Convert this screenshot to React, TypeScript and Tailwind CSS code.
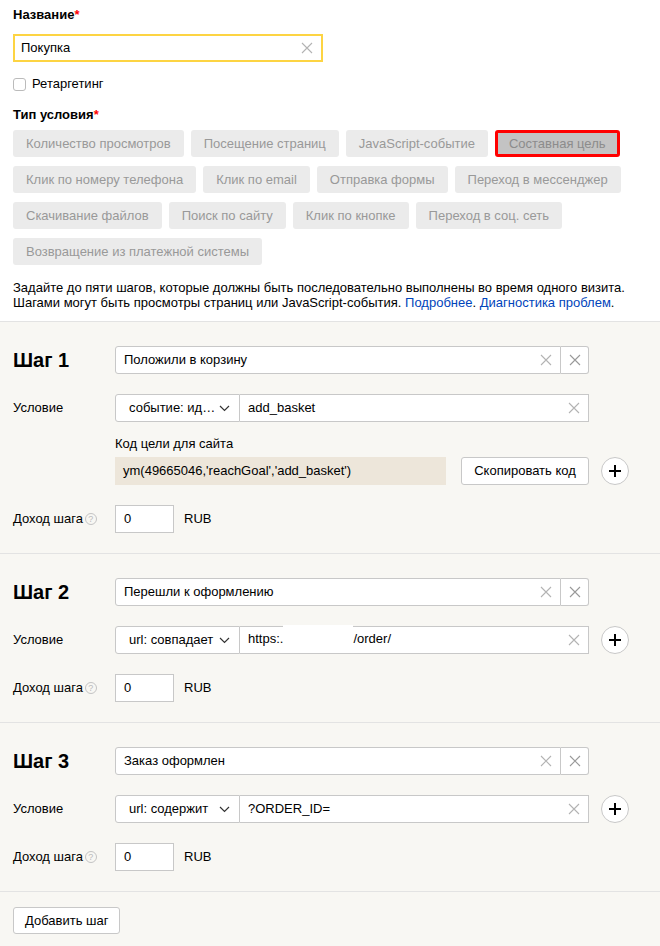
import React from "react";

const font = { fontFamily: '"Liberation Sans", Arial, sans-serif' };

const goalTypes = [
  ["Количество просмотров", "Посещение страниц", "JavaScript-событие", "Составная цель"],
  ["Клик по номеру телефона", "Клик по email", "Отправка формы", "Переход в мессенджер"],
  ["Скачивание файлов", "Поиск по сайту", "Клик по кнопке", "Переход в соц. сеть"],
  ["Возвращение из платежной системы"],
];

const Cross = ({ size = 12, color = "#b3b3b3" }: { size?: number; color?: string }) => (
  <svg width={size} height={size} viewBox="0 0 12 12" fill="none" stroke={color} strokeWidth="1.1">
    <path d="M1 1l10 10M11 1L1 11" />
  </svg>
);

const Chevron = () => (
  <svg width="11" height="7" viewBox="0 0 11 7" fill="none" stroke="#333" strokeWidth="1.2">
    <path d="M1 1l4.5 4.5L10 1" />
  </svg>
);

const PlusCircle = () => (
  <button className="ml-[12px] w-[28px] h-[28px] rounded-full border border-[#c8c8c8] bg-white flex items-center justify-center">
    <svg width="12" height="12" viewBox="0 0 12 12" stroke="#000" strokeWidth="2">
      <path d="M6 0v12M0 6h12" />
    </svg>
  </button>
);

const QuestionIcon = () => (
  <span className="ml-[2px] inline-flex w-[12px] h-[12px] rounded-full border border-[#c4c4c4] text-[9px] leading-none text-[#bbb] items-center justify-center">
    ?
  </span>
);

type Step = {
  n: number;
  name: string;
  cond: string;
  value: React.ReactNode;
  code?: boolean;
  plus?: boolean;
};

const steps: Step[] = [
  { n: 1, name: "Положили в корзину", cond: "событие: ид…", value: "add_basket", code: true },
  {
    n: 2,
    name: "Перешли к оформлению",
    cond: "url: совпадает",
    value: (
      <>
        https:.<span className="inline-block w-[70px] h-[24px] bg-white align-middle -mt-[6px]" />/order/
      </>
    ),
    plus: true,
  },
  { n: 3, name: "Заказ оформлен", cond: "url: содержит", value: "?ORDER_ID=", plus: true },
];

const StepBlock = ({ s }: { s: Step }) => (
  <div className="pl-[13px] pt-[24px] pb-[20px] border-b border-[#e3e3e3]">
    <div className="flex items-center h-[28px]">
      <div className="w-[102px] text-[20px] leading-[28px] font-bold text-black">Шаг {s.n}</div>
      <div className="flex h-[28px] w-[474px]">
        <div className="flex-1 flex items-center bg-white border border-[#c8c8c8] rounded-l-[3px] pl-[8px] pr-[8px] text-[13px] text-black">
          <span className="flex-1">{s.name}</span>
          <Cross />
        </div>
        <div className="w-[28px] flex items-center justify-center bg-white border border-l-0 border-[#c8c8c8] rounded-r-[3px]">
          <Cross color="#999" />
        </div>
      </div>
    </div>

    <div className="flex items-center h-[28px] mt-[20px]">
      <div className="w-[102px] text-[13px] text-black">Условие</div>
      <div className="flex h-[28px] w-[474px]">
        <div className="w-[125px] flex items-center justify-between bg-white border border-[#c8c8c8] rounded-l-[3px] pl-[13px] pr-[9px] text-[13px] text-black">
          <span>{s.cond}</span>
          <Chevron />
        </div>
        <div className="flex-1 flex items-center bg-white border border-l-0 border-[#c8c8c8] pl-[8px] pr-[8px] text-[13px] text-black">
          <span className="flex-1">{s.value}</span>
          <Cross />
        </div>
      </div>
      {s.plus && <PlusCircle />}
    </div>

    {s.code && (
      <div className="ml-[102px] mt-[14px]">
        <div className="text-[13px] text-black leading-[16px]">Код цели для сайта</div>
        <div className="flex items-center h-[28px] mt-[5px]">
          <div className="w-[331px] h-[28px] bg-[#ede6da] flex items-center pl-[8px] text-[13px] text-black">
            ym(49665046,'reachGoal','add_basket')
          </div>
          <button className="ml-[15px] w-[128px] h-[28px] bg-white border border-[#c8c8c8] rounded-[3px] text-[13px] text-black">
            Скопировать код
          </button>
          <PlusCircle />
        </div>
      </div>
    )}

    <div className="flex items-center h-[28px] mt-[20px]">
      <div className="w-[102px] text-[13px] text-black flex items-center">
        Доход шага
        <QuestionIcon />
      </div>
      <div className="w-[59px] h-[28px] bg-white border border-[#c8c8c8] flex items-center pl-[8px] text-[13px] text-black">
        0
      </div>
      <span className="ml-[10px] text-[13px] text-black">RUB</span>
    </div>
  </div>
);

export default function App() {
  return (
    <div className="w-[660px] min-h-[946px] bg-[#f8f7f3] leading-[16px]" style={font}>
      <div className="bg-white px-[13px] pt-[7px] pb-[11px] border-b border-[#e3e3e3]">
        <div className="text-[13px] font-bold text-black">
          Название<span className="text-[#f00]">*</span>
        </div>
        <div className="mt-[11px] w-[310px] h-[28px] border-2 border-[#fdd443] flex items-center pl-[6px] pr-[8px] text-[13px] text-black">
          <span className="flex-1">Покупка</span>
          <Cross />
        </div>
        <label className="mt-[14px] flex items-center gap-[6px] text-[13px] text-black">
          <span className="w-[13px] h-[13px] border border-[#bbb] rounded-[3px] bg-white" />
          Ретаргетинг
        </label>
        <div className="mt-[15px] text-[13px] font-bold text-black">
          Тип условия<span className="text-[#f00]">*</span>
        </div>
        <div className="mt-[7px] flex flex-col gap-[9px]">
          {goalTypes.map((row, i) => (
            <div key={i} className="flex gap-[7px]">
              {row.map((t) =>
                t === "Составная цель" ? (
                  <div
                    key={t}
                    className="h-[27px] px-[11px] flex items-center rounded-[3px] bg-[#c3c3c3] border-[3px] border-[#f00] text-[13px] text-[#8c8c8c]"
                  >
                    {t}
                  </div>
                ) : (
                  <div
                    key={t}
                    className="h-[27px] px-[13px] flex items-center rounded-[3px] bg-[#ebebeb] text-[13px] text-[#999]"
                  >
                    {t}
                  </div>
                )
              )}
            </div>
          ))}
        </div>
        <p className="mt-[15px] text-[13px] leading-[15px] text-black">
          Задайте до пяти шагов, которые должны быть последовательно выполнены во время одного визита.
          <br />
          Шагами могут быть просмотры страниц или JavaScript-события.{" "}
          <a className="text-[#04b]">Подробнее</a>. <a className="text-[#04b]">Диагностика проблем</a>.
        </p>
      </div>

      {steps.map((s) => (
        <StepBlock key={s.n} s={s} />
      ))}

      <div className="pl-[13px] pt-[15px] pb-[12px]">
        <button className="h-[27px] px-[11px] bg-white border border-[#c8c8c8] rounded-[3px] text-[13px] text-black">
          Добавить шаг
        </button>
      </div>
    </div>
  );
}
